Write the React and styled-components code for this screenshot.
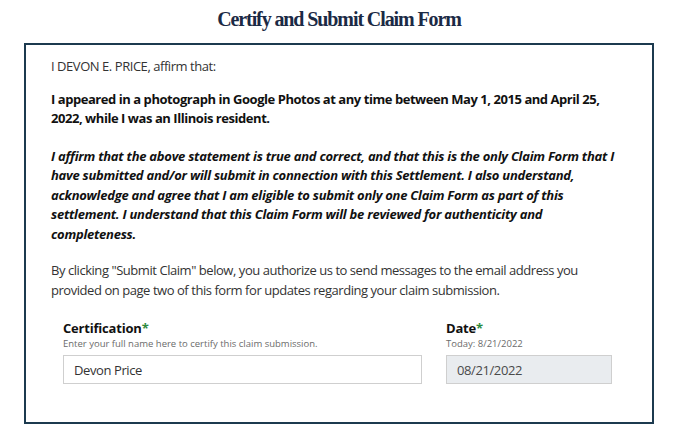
import styled, { createGlobalStyle } from 'styled-components';

const GlobalStyle = createGlobalStyle`
  html, body {
    margin: 0;
    padding: 0;
    background: #ffffff;
  }
  body {
    font-family: "Open Sans", "Noto Sans", sans-serif;
    color: #222;
  }
`;

const Page = styled.div`
  width: 630px;
  margin-left: 24px;
  padding-top: 6px;
`;

const Title = styled.h2`
  margin: 0 0 11px;
  text-align: center;
  font-family: "Liberation Serif", serif;
  font-weight: 700;
  font-size: 20px;
  line-height: 26px;
  letter-spacing: -1.1px;
  color: #1b2a45;
`;

const Card = styled.div`
  border: 2px solid #1c3a4f;
  padding: 12px 25px 30px 25px;
  min-height: 381px;
  box-sizing: border-box;
`;

const Para = styled.p`
  margin: 0 0 ${p => p.$gap || 19}px;
  font-size: 13px;
  line-height: 19.5px;
  letter-spacing: ${p => (p.$italic ? -0.25 : -0.45)}px;
  font-weight: ${p => (p.$bold ? 700 : 400)};
  font-style: ${p => (p.$italic ? 'italic' : 'normal')};
  color: ${p => (p.$bold ? '#111' : '#333')};
`;

const FieldRow = styled.div`
  display: flex;
  gap: 24px;
  padding-left: 12px;
  margin-top: 4px;
`;

const Field = styled.div`
  display: flex;
  flex-direction: column;
  width: ${p => p.$width}px;
`;

const Label = styled.label`
  font-size: 13px;
  font-weight: 700;
  line-height: 18px;
  letter-spacing: -0.2px;
  color: #111;
`;

const Req = styled.span`
  color: #2e8b3e;
`;

const Hint = styled.span`
  font-size: 9.5px;
  line-height: 14px;
  color: #6b6b6b;
  margin-bottom: 4px;
`;

const Input = styled.input`
  box-sizing: border-box;
  height: 29px;
  width: 100%;
  border: 1px solid #cfcfcf;
  background: ${p => (p.$locked ? '#e9ecef' : '#fff')};
  color: ${p => (p.$locked ? '#4a4a4a' : '#333')};
  font-family: "Open Sans", "Noto Sans", sans-serif;
  font-size: 13px;
  letter-spacing: -0.4px;
  padding: 0 10px;
  outline: none;
`;

export default function App() {
  return (
    <>
      <GlobalStyle />
      <Page>
        <Title>Certify and Submit Claim Form</Title>
        <Card>
          <Para $gap={13}>I DEVON E. PRICE, affirm that:</Para>
          <Para $bold $gap={18}>
            I appeared in a photograph in Google Photos at any time between May 1, 2015 and April 25,
            2022, while I was an Illinois resident.
          </Para>
          <Para $bold $italic $gap={17}>
            I affirm that the above statement is true and correct, and that this is the only Claim Form that I
            have submitted and/or will submit in connection with this Settlement. I also understand,
            acknowledge and agree that I am eligible to submit only one Claim Form as part of this
            settlement. I understand that this Claim Form will be reviewed for authenticity and
            completeness.
          </Para>
          <Para $gap={19}>
            By clicking "Submit Claim" below, you authorize us to send messages to the email address you
            provided on page two of this form for updates regarding your claim submission.
          </Para>
          <FieldRow>
            <Field $width={359}>
              <Label>Certification<Req>*</Req></Label>
              <Hint>Enter your full name here to certify this claim submission.</Hint>
              <Input defaultValue="Devon Price" />
            </Field>
            <Field $width={166}>
              <Label>Date<Req>*</Req></Label>
              <Hint>Today: 8/21/2022</Hint>
              <Input defaultValue="08/21/2022" readOnly $locked />
            </Field>
          </FieldRow>
        </Card>
      </Page>
    </>
  );
}
